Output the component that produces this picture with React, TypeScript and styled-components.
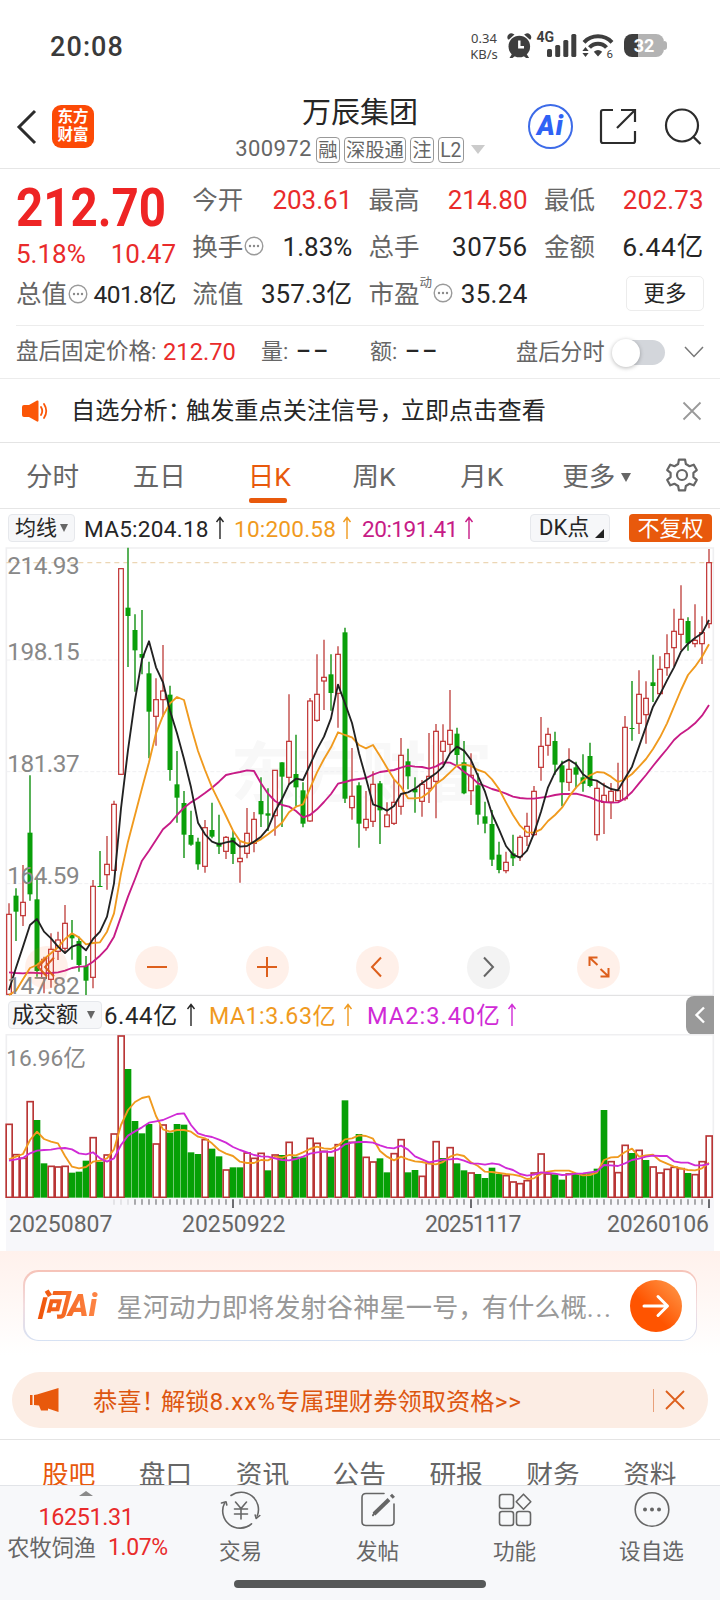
import React from 'react';
import styled, { createGlobalStyle } from 'styled-components';

const RED = '#e92b2b';
const DARK = '#262626';
const GRAY = '#666666';
const ORANGE = '#e8590c';
const AMBER = '#f09a1e';
const MAGENTA = '#c71b86';
const VIOLET = '#d02bd6';

const GlobalStyle = createGlobalStyle`
  * { box-sizing: border-box; }
  html, body { margin: 0; padding: 0; background: #fff; }
  body {
    width: 720px;
    font-family: Roboto, "Noto Sans CJK SC", sans-serif;
    color: ${DARK};
    line-height: 1;
  }
  svg { display: block; flex: none; }
`;

const Screen = styled.div`
  width: 720px;
  height: 1600px;
  overflow: hidden;
  background: #fff;
  display: flex;
  flex-direction: column;
`;

const Txt = styled.span<{ $s: number; $c?: string; $ls?: number; $ml?: number; $mt?: number; $w?: number; $b?: number }>`
  flex: none;
  white-space: nowrap;
  line-height: 1.3;
  font-size: ${p => p.$s}px;
  color: ${p => p.$c || DARK};
  letter-spacing: ${p => p.$ls || 0}px;
  margin-left: ${p => p.$ml || 0}px;
  margin-top: ${p => p.$mt || 0}px;
  font-weight: ${p => p.$b || 400};
  ${p => (p.$w ? `width: ${p.$w}px;` : '')}
`;
const Spaced = styled.span<{ $ls: number }>`
  letter-spacing: ${p => p.$ls}px;
`;

/* ---------- status bar ---------- */

const StatusBar = styled.div`
  height: 85px;
  padding: 6px 53px 0 50px;
  display: flex;
  align-items: center;
  flex: none;
`;
const StatusIcons = styled.div`
  margin-left: auto;
  display: flex;
  align-items: center;
`;
const NetSpeed = styled.div`
  font-family: "Noto Sans", sans-serif;
  font-size: 13px;
  line-height: 16px;
  color: #444;
  width: 36px;
  text-align: center;
`;
const Battery = styled.div`
  width: 40px;
  height: 23px;
  margin-left: 7px;
  border-radius: 8px;
  background: linear-gradient(90deg, #3e3e3e 0 14px, #b3b3b3 14px);
  color: #fff;
  font-size: 18px;
  font-weight: 700;
  line-height: 24px;
  text-align: center;
`;
const BatteryTip = styled.div`
  width: 3px;
  height: 9px;
  border-radius: 0 4px 4px 0;
  background: #b3b3b3;
`;

/* ---------- header ---------- */

const Header = styled.header`
  flex: none;
  height: 84px;
  border-bottom: 1px solid #e6e6e6;
  display: grid;
  grid-template-columns: 228px 264px 228px;
`;
const HeadLeft = styled.div`
  display: flex;
  align-items: center;
  padding-left: 16px;
`;
const Logo = styled.div`
  margin-left: 15px;
  width: 42px;
  height: 43px;
  border-radius: 9px;
  background: #fc4a06;
  color: #fff;
  font-size: 15.5px;
  font-weight: 700;
  line-height: 18px;
  text-align: center;
  padding-top: 3px;
`;
const HeadCenter = styled.div`
  display: flex;
  flex-direction: column;
  align-items: center;
  padding-top: 10px;
`;
const SubRow = styled.div`
  display: flex;
  align-items: center;
  height: 26px;
  margin-top: 4px;
`;
const Tag = styled.span<{ $w: number }>`
  width: ${p => p.$w}px;
  height: 26px;
  margin-left: 4px;
  border: 1px solid #999;
  border-radius: 4px;
  font-size: 19.3px;
  line-height: 25px;
  text-align: center;
  color: ${GRAY};
  white-space: nowrap;
`;
const HeadRight = styled.div`
  display: flex;
  align-items: center;
  padding-left: 36px;
`;
const AiBadge = styled.div`
  width: 45px;
  height: 45px;
  border: 2px solid #3d6be8;
  border-radius: 50%;
  color: #2f62f5;
  font-size: 27px;
  font-weight: 900;
  font-style: italic;
  line-height: 41px;
  text-align: center;
  letter-spacing: 1px;
`;

/* ---------- quote ---------- */

const Quote = styled.section`
  flex: none;
  height: 156px;
  padding: 8px 16px 0;
  display: grid;
  grid-template-columns: 160px 160px 159px 160px;
  column-gap: 16.3px;
`;
const QuoteCol = styled.div`
  display: flex;
  flex-direction: column;
`;
const Cell = styled.div<{ $h?: number }>`
  height: ${p => p.$h || 47}px;
  display: flex;
  align-items: center;
  justify-content: space-between;
`;
const CellLabel = styled.div`
  display: flex;
  align-items: center;
  font-size: 25.5px;
  color: ${GRAY};
  white-space: nowrap;
`;
const BigPrice = styled.div`
  height: 61px;
  font-size: 54px;
  font-weight: 700;
  line-height: 61px;
  color: #ee2424;
  white-space: nowrap;
  transform: scaleX(0.88);
  transform-origin: left center;
`;
const MoreButton = styled.div`
  margin: 5px 0 0 auto;
  width: 78px;
  height: 35px;
  border: 1px solid #ececec;
  border-radius: 5px;
  font-size: 21.5px;
  line-height: 34px;
  text-align: center;
`;
const Sup = styled.sup`
  font-size: 12.5px;
  align-self: flex-start;
  margin-top: -5px;
`;

const AfterHours = styled.section`
  flex: none;
  height: 54px;
  border-bottom: 1px solid #ececec;
  padding: 0 16px;
`;
const AfterRow = styled.div`
  height: 53px;
  border-top: 1px solid #ececec;
  display: flex;
  align-items: center;
`;
const Toggle = styled.div`
  width: 52px;
  height: 25px;
  margin-left: 8px;
  border-radius: 13px;
  background: #d3d6db;
`;
const Knob = styled.div`
  width: 28px;
  height: 28px;
  margin: -1px 0 0 -1px;
  border-radius: 50%;
  background: #fff;
  box-shadow: 0 1px 4px rgba(0, 0, 0, 0.28);
`;

const Notice = styled.section`
  flex: none;
  height: 64px;
  padding: 0 18px 0 21px;
  border-bottom: 1px solid #e4e4e4;
  display: flex;
  align-items: center;
`;

/* ---------- chart tabs ---------- */

const Tabs = styled.nav`
  flex: none;
  height: 66px;
  border-bottom: 1px solid #e6e6e6;
  padding: 3px 21px 0 26px;
  display: flex;
  align-items: center;
`;
const TabItem = styled.div<{ $w: number; $on?: boolean }>`
  width: ${p => p.$w}px;
  height: 56px;
  padding-top: 11px;
  display: flex;
  flex-direction: column;
  align-items: flex-start;
  font-size: 26.5px;
  line-height: 34px;
  color: ${p => (p.$on ? ORANGE : GRAY)};
`;
const Underline = styled.i`
  width: 38px;
  height: 5px;
  margin: 4px 0 0 1px;
  border-radius: 2px;
  background: ${ORANGE};
`;
const TabMore = styled.div`
  display: flex;
  align-items: center;
`;
const Caret = styled.i<{ $c?: string; $w?: number; $h?: number; $ml?: number }>`
  flex: none;
  border-left: ${p => (p.$w || 10) / 2}px solid transparent;
  border-right: ${p => (p.$w || 10) / 2}px solid transparent;
  border-top: ${p => p.$h || 8}px solid ${p => p.$c || GRAY};
  margin-left: ${p => p.$ml || 0}px;
`;

/* ---------- charts ---------- */

const Legend = styled.div<{ $h: number }>`
  flex: none;
  height: ${p => p.$h}px;
  padding-left: 8px;
  display: flex;
  align-items: center;
`;
const Picker = styled.div<{ $w: number; $ml?: number; $pl: number }>`
  width: ${p => p.$w}px;
  height: 28px;
  margin-left: ${p => p.$ml || 0}px;
  padding-left: ${p => p.$pl}px;
  border: 1px solid #e6e8ec;
  border-radius: 4px;
  background: #f6f7f9;
  display: flex;
  align-items: center;
  flex: none;
`;
const Adjust = styled.div`
  width: 83px;
  height: 28px;
  margin-left: 19px;
  border-radius: 4px;
  background: ${ORANGE};
  color: #fff;
  font-size: 22px;
  line-height: 30px;
  text-align: center;
`;
const Panel = styled.div<{ $h: number }>`
  position: relative;
  flex: none;
  height: ${p => p.$h}px;
`;
const ChartButtons = styled.div`
  position: absolute;
  left: 24.5px;
  top: 398.5px;
  display: flex;
  gap: 67.6px;
`;
const RoundButton = styled.div<{ $muted?: boolean }>`
  width: 43px;
  height: 43px;
  border-radius: 50%;
  background: ${p => (p.$muted ? '#f3f3f3' : 'rgba(255, 105, 40, 0.1)')};
  display: flex;
  align-items: center;
  justify-content: center;
`;
const PullTab = styled.div`
  margin: 0 6px 0 auto;
  width: 28px;
  height: 39px;
  border-radius: 8px 0 0 8px;
  background: #999;
  display: flex;
  align-items: center;
  justify-content: center;
`;
const Axis = styled.div`
  flex: none;
  height: 53px;
  margin: 0 6px;
  background: #f7f7fa;
`;
const AxisLabels = styled.div`
  display: flex;
  padding: 2px 0 0 3px;
`;

/* ---------- promos ---------- */

const AskArea = styled.section`
  flex: none;
  height: 121px;
  padding: 19px 23px 0;
  background: linear-gradient(#fff1ec, #fff 104px);
`;
const AskFrame = styled.div`
  height: 71px;
  padding: 1.5px;
  border-radius: 15px;
  background: linear-gradient(#f6c3b8, #f2dcdf 50%, #d6e1f3);
`;
const AskBox = styled.div`
  height: 68px;
  border-radius: 14px;
  background: #fff;
  padding: 0 14px 0 12px;
  display: flex;
  align-items: center;
`;
const AskLogo = styled.div`
  width: 66px;
  font-size: 31px;
  font-weight: 900;
  font-style: italic;
  line-height: 36px;
  letter-spacing: 0.4px;
  white-space: nowrap;
  color: transparent;
  background: linear-gradient(90deg, #ef5308, #ff8a4c);
  background-clip: text;
  -webkit-background-clip: text;
`;
const Go = styled.div`
  margin-left: auto;
  width: 52px;
  height: 52px;
  border-radius: 50%;
  background: linear-gradient(225deg, #ff9142 10%, #ff5400 60%);
  display: flex;
  align-items: center;
  justify-content: center;
`;
const Promo = styled.section`
  flex: none;
  height: 56px;
  margin: 0 12px 11px;
  padding: 0 23px 0 17px;
  border-radius: 28px;
  background: #fcede4;
  display: flex;
  align-items: center;
`;
const Separator = styled.i`
  width: 1px;
  height: 23px;
  margin: 0 11px 0 auto;
  background: #e8a07a;
`;

const InfoTabs = styled.nav`
  flex: none;
  height: 46px;
  border-top: 1px solid #e4e4e4;
  overflow: hidden;
  padding: 17px 0 0 42px;
  display: flex;
`;
const InfoTab = styled.div<{ $on?: boolean }>`
  width: 97px;
  font-size: 26.7px;
  line-height: 36px;
  color: ${p => (p.$on ? ORANGE : GRAY)};
`;

/* ---------- bottom bar ---------- */

const Bottom = styled.footer`
  flex: 1;
  border-top: 1px solid #e2e4e8;
  background: #f7f8fa;
  display: flex;
  flex-direction: column;
`;
const BottomRow = styled.div`
  height: 94px;
  display: flex;
`;
const Sector = styled.div`
  width: 172px;
  display: flex;
  flex-direction: column;
  align-items: center;
  padding-top: 5px;
`;
const SectorLine = styled.div<{ $mt?: number }>`
  display: flex;
  align-items: center;
  height: 30px;
  margin-top: ${p => p.$mt || 0}px;
`;
const Action = styled.div`
  width: 137px;
  padding-top: 5px;
  display: flex;
  flex-direction: column;
  align-items: center;
`;
const HomeBar = styled.div`
  width: 252px;
  height: 8px;
  margin-left: 234px;
  border-radius: 4px;
  background: #565858;
`;

/* ---------- chart data (drawing units are thirds of a pixel) ---------- */

const PITCH = 21;
const cx = (i: number) => 27 + i * PITCH;

// direction, high, low, body top, body bottom
const candles: string[] = `
r,1090,1363,1123,1363 g,1045,1203,1067,1115 r,975,1158,1087,1127 g,706,1082,878,1063 g,1012,1310,1078,1293
r,1250,1360,1258,1315 r,1180,1343,1228,1318 r,1175,1260,1200,1234 r,1095,1240,1150,1225 g,1140,1259,1184,1195
g,1190,1295,1203,1275 g,1248,1365,1277,1322 r,1020,1345,1039,1312 g,933,1041,1038,1041 r,888,1049,973,1004
r,782,992,793,991 r,86,703,86,703 g,23,381,203,228 g,223,455,270,331 g,210,403,342,353
g,365,655,400,515 r,415,617,479,529 r,315,530,453,479 g,437,722,464,690 g,633,848,733,773
g,753,954,789,884 g,812,917,885,914 g,893,989,905,973 r,840,998,863,979 g,788,895,870,890
g,824,942,908,920 r,888,957,892,934 g,873,972,893,942 r,903,1028,955,965 r,804,955,880,940
r,816,937,838,910 g,712,861,783,823 g,745,873,820,827 r,690,887,691,827 g,667,861,667,710
r,463,735,604,712 g,584,798,702,742 g,727,862,751,851 r,474,845,483,843 r,343,545,463,541
r,299,510,412,423 g,343,512,403,459 r,319,563,343,460 g,263,789,277,776 r,624,839,769,803
g,727,923,736,851 r,753,872,838,863 r,694,861,733,844 g,723,912,730,811 r,787,860,825,860
r,718,855,787,850 r,594,824,646,799 g,626,748,664,709 g,712,818,747,757 r,720,830,733,784
r,579,789,709,745 r,552,835,574,724 r,553,675,604,634 r,450,638,571,613 g,563,677,581,645
g,603,763,667,760 r,640,795,706,752 g,700,854,736,824 g,785,880,829,851 g,810,978,852,959
g,905,1000,944,990 r,935,1000,967,992 g,884,978,940,955 r,886,963,892,950 r,818,918,859,889
r,738,887,754,884 r,531,722,619,682 r,563,647,583,616 g,575,704,603,674 g,662,799,676,727
r,625,753,688,727 g,665,745,682,704 g,643,755,712,731 g,608,742,648,738 r,722,902,745,884
r,728,882,766,787 r,729,837,754,786 r,668,782,752,782 r,528,782,562,776 g,423,602,564,567
r,391,582,463,550 r,424,611,475,524 g,344,486,427,438 r,349,463,388,461 r,283,407,341,383
r,206,380,274,323 r,136,330,238,283 g,232,332,243,310 r,193,322,301,311 r,229,372,278,311
r,27,265,68,251`.trim().split(/\s+/);

const ma5 = [1350,1283,1220,1155,1137,1175,1195,1220,1239,1220,1213,1231,1197,1175,1130,1030,805,630,480,358,304,382,427,512,580,657,742,848,883,905,913,907,903,920,918,905,890,865,815,777,733,716,720,675,628,590,535,434,490,549,640,715,793,801,812,798,762,757,746,730,715,700,680,640,620,632,660,708,755,822,868,918,944,953,932,880,815,742,697,670,659,673,703,718,722,736,747,751,715,680,620,560,500,463,421,382,335,311,294,280,240];
const ma10 = [1365,1352,1318,1284,1275,1257,1240,1222,1197,1180,1192,1213,1209,1207,1175,1120,1000,905,825,745,667,580,527,490,471,480,560,633,690,742,785,828,872,903,910,908,898,883,866,848,817,800,793,745,697,657,622,577,585,592,615,625,615,648,683,718,740,775,775,772,757,732,717,697,677,673,678,690,697,718,747,787,825,857,877,878,868,843,825,803,770,743,722,706,696,698,710,726,718,702,680,657,627,592,550,500,450,405,380,350,313];
const ma20 = [1297,1299,1300,1298,1299,1300,1299,1297,1292,1284,1280,1279,1265,1247,1225,1190,1130,1070,1017,962,932,900,868,850,825,803,787,774,759,743,725,705,700,696,691,693,730,761,783,795,800,813,832,825,808,786,762,731,726,720,717,714,704,696,693,690,683,677,680,681,686,679,667,668,678,695,710,730,738,747,753,761,770,774,776,776,773,770,765,762,762,761,766,772,781,786,788,787,775,756,730,705,678,652,627,600,581,567,550,527,495];

const volumes: string[] = `
r401 r492 r503 r333 g390 g520 r527 r529 r527 g548 g545 g512 r441 g515 r493 r430 r136 g237 g393 g430
g402 r460 r403 g428 g402 g404 g487 g492 r447 g476 g499 r538 g532 g532 r487 r503 r488 g541 r493 g495
r455 g500 g502 r443 r458 r482 g500 r462 g331 r455 g432 r500 r514 g505 g547 r489 r447 g547 g540 r557
r518 r453 g504 r471 g520 g541 r547 g552 g564 g533 g552 r555 r574 r579 r570 r547 r490 r550 g553 g569
r550 g550 g550 g550 g536 g360 r513 r546 r464 g489 r479 g510 r529 r547 r536 r530 r534 g549 r552 r513 r436`
  .trim().split(/\s+/);
const vma5 = [508,500,492,450,425,447,455,460,498,530,535,531,515,512,505,478,405,360,336,324,319,378,418,425,420,420,425,440,445,460,480,491,498,515,519,519,510,511,500,503,495,496,487,477,470,475,477,467,448,445,436,438,446,483,500,511,500,508,514,516,521,523,516,500,493,498,517,528,545,546,549,552,554,558,567,565,551,545,542,542,542,550,556,555,548,510,502,501,486,476,500,496,494,512,521,530,535,540,541,535,518];
const vma10 = [512,508,504,490,482,480,479,475,474,478,490,493,487,505,515,505,465,437,424,412,398,394,390,381,372,370,405,430,437,441,449,458,471,480,487,495,499,500,505,510,511,507,500,491,487,485,486,479,463,458,456,456,458,466,473,475,467,479,499,508,517,513,509,508,506,512,520,521,524,520,523,534,540,552,557,554,547,549,551,555,554,551,550,547,544,525,526,528,520,510,506,500,497,498,498,514,518,518,526,526,522];

const Line = ({ data, color }: { data: number[]; color: string }) => (
  <polyline
    points={data.map((v, i) => `${cx(i)},${v}`).join(' ')}
    fill="none"
    stroke={color}
    strokeWidth={5.6}
    strokeLinejoin="round"
  />
);

const PriceChart = () => (
  <svg width="720" height="449" viewBox="0 21 2160 1347">
    <text x="692" y="768" fontSize="196" fontWeight="700" fill="#f8f8f8">东方财富</text>
    <path d="M19 1368V24H2140V1368" fill="none" stroke="#efeff1" strokeWidth="5" />
    <path d="M19 1366H2140" stroke="#dcdcde" strokeWidth="3" />
    <path d="M19 360H2140M19 695H2140M19 1031H2140" stroke="#f0f0f2" strokeWidth="3" strokeDasharray="12 6" />
    <path d="M19 68H2140" stroke="#ecd6b4" strokeWidth="4" strokeDasharray="15 12" />
    {candles.map((c, i) => {
      const [dir, h, l, t, b] = c.split(',');
      const up = dir === 'r';
      const top = +t;
      const size = Math.max(+b - top, 2);
      return (
        <g key={i}>
          <path d={`M${cx(i)} ${h}V${l}`} stroke={up ? '#d17775' : '#4cac4c'} strokeWidth="5.6" />
          {up ? (
            <rect x={cx(i) - 7} y={top} width="14" height={size} fill="#fff" stroke="#c03232" strokeWidth="3.6" />
          ) : (
            <rect x={cx(i) - 7.5} y={top} width="15" height={size} fill="#0a9f0a" />
          )}
        </g>
      );
    })}
    <Line data={ma20} color={MAGENTA} />
    <Line data={ma10} color={AMBER} />
    <Line data={ma5} color="#222" />
    <g fontSize="73" fill="#888" letterSpacing="-1.5">
      <text x="22" y="103">214.93</text>
      <text x="22" y="360">198.15</text>
      <text x="22" y="695">181.37</text>
      <text x="22" y="1031">164.59</text>
      <text x="22" y="1361">147.82</text>
    </g>
  </svg>
);

const VolumeChart = () => (
  <svg width="720" height="164" viewBox="0 132 2160 492">
    <path d="M19 624V134H2140V624" fill="none" stroke="#efeff1" strokeWidth="5" />
    {volumes.map((v, i) => {
      const top = +v.slice(1);
      return v[0] === 'r' ? (
        <rect key={i} x={cx(i) - 8.5} y={top + 2} width="18" height={620 - top} fill="#fff" stroke="#b93636" strokeWidth="5" />
      ) : (
        <rect key={i} x={cx(i) - 10} y={top} width="20" height={623 - top} fill="#06a006" />
      );
    })}
    <Line data={vma5} color={AMBER} />
    <Line data={vma10} color={VIOLET} />
    <text x="19" y="227" fontSize="68" fill="#888">16.96亿</text>
  </svg>
);

const Ticks = () => (
  <svg width="708" height="10" viewBox="18 623 2124 30">
    {Array.from({ length: 86 }, (_, k) => k + 15).map(i => {
      const major = i === 32 || i === 66 || i === 100;
      return (
        <path
          key={i}
          d={`M${cx(i)} 627V${major ? 654 : 643}`}
          stroke={i < 18 ? '#d4d4d8' : '#6c6c70'}
          strokeWidth={major ? 6 : 3.4}
        />
      );
    })}
  </svg>
);

/* ---------- icons ---------- */

const Arrow = styled.svg<{ $ml: number }>`
  margin-left: ${p => p.$ml}px;
`;
const Up = ({ color, ml }: { color: string; ml: number }) => (
  <Arrow $ml={ml} width="10" height="24" viewBox="0 0 10 24">
    <path d="M5 23V2M1.5 6L5 1.5L8.5 6" fill="none" stroke={color} strokeWidth="1.4" />
  </Arrow>
);

const DotsSvg = styled.svg`
  margin: -3px 0 0 1px;
`;
const Dots = () => (
  <DotsSvg width="20" height="20" viewBox="0 0 20 20">
    <circle cx="10" cy="10" r="8.8" fill="none" stroke="#9a9a9a" strokeWidth="1.400" />
    <g fill="#8a8a8a">
      <circle cx="6" cy="10" r="1.200" />
      <circle cx="10" cy="10" r="1.200" />
      <circle cx="14" cy="10" r="1.200" />
    </g>
  </DotsSvg>
);

const GlyphStrip = styled.svg`
  margin-top: -2px;
`;
const StatusGlyphs = () => (
  <GlyphStrip width="115" height="28" viewBox="-2 0 115 28">
    <g fill="#3e3e3e">
      <circle cx="15.3" cy="15.5" r="10.8" />
      <path d="M4 8.5A4 4 0 0 1 9.5 3L10.5 3.6L5 8.5ZM26.6 8.5A4 4 0 0 0 21.1 3L20.1 3.6L25.6 8.5Z" />
      <path d="M8 23L5.5 27H8.5L11 25ZM22.6 23L25.1 27H22.1L19.6 25Z" />
      <rect x="43" y="18" width="5" height="8" rx="1.5" />
      <rect x="51.2" y="14" width="5" height="12" rx="1.5" />
      <rect x="59.3" y="9" width="5" height="17" rx="1.5" />
      <rect x="67.3" y="3" width="5" height="23" rx="1.5" />
      <path d="M94 25.5L89.800 20.8A6.500 6.500 0 0 1 98.200 20.8ZM78.400 20L81.500 16L84.600 20ZM78.400 22L81.500 26L84.600 22Z" />
    </g>
    <path d="M15.300 9.500V16.300H20" fill="none" stroke="#fff" strokeWidth="2.400" />
    <path d="M80 11.300A19.500 19.500 0 0 1 108 11.300M85.500 16.500A11.500 11.500 0 0 1 102.500 16.500" fill="none" stroke="#3e3e3e" strokeWidth="4" />
    <text x="32.500" y="11" fontSize="14" fontWeight="700" fill="#3e3e3e">4G</text>
    <text x="102.500" y="26.500" fontSize="11.500" fill="#3e3e3e">6</text>
  </GlyphStrip>
);

const stroke = { fill: 'none', stroke: '#666', strokeWidth: 1.6, strokeLinecap: 'round' as const, strokeLinejoin: 'round' as const };

const TradeIcon = () => (
  <svg width="42" height="38" viewBox="0 0 42 38" {...stroke}>
    <path d="M11 4.5A17.3 17.3 0 0 1 37.2 25M31.5 32.8A17.3 17.3 0 0 1 4.6 12" />
    <path d="M1.5 12L6 10.8L6.8 14M39.8 24.5L36.2 27.5L35.2 24" />
    <path d="M15.5 11L21 17.5L26.5 11M21 17.5V28M14.5 18H27.5M14.5 23H27.5" />
  </svg>
);
const PostIcon = () => (
  <svg width="36" height="38" viewBox="0 0 36 38" {...stroke}>
    <path d="M24 2.5H6Q2 2.5 2 6.5V30.5Q2 34.5 6 34.5H30Q34 34.5 34 30.5V13" />
    <path d="M14 23L29 8.5" strokeWidth="4" strokeLinecap="butt" />
    <path d="M13 24.300L15.500 20.500" strokeWidth="2" />
    <path d="M31.300 6.300L33.500 4.200" strokeWidth="4.200" strokeLinecap="butt" />
  </svg>
);
const FunctionIcon = () => (
  <svg width="34" height="38" viewBox="0 0 34 38" {...stroke}>
    <rect x="1.5" y="3.5" width="14" height="14" rx="2.5" />
    <rect x="1.5" y="20.5" width="14" height="14" rx="2.5" />
    <rect x="18.5" y="20.5" width="14" height="14" rx="2.5" />
    <path d="M25.5 3.2L32.8 10.7L25.5 18.2L18.2 10.7Z" />
  </svg>
);
const MoreIcon = () => (
  <svg width="38" height="38" viewBox="0 0 38 38" {...stroke}>
    <circle cx="19" cy="18.5" r="16.8" />
    <g fill="#666" stroke="none">
      <circle cx="12" cy="18.5" r="2" />
      <circle cx="19" cy="18.5" r="2" />
      <circle cx="26" cy="18.5" r="2" />
    </g>
  </svg>
);

const Glyph = ({ d, color = '#dd5f1c', w = 2 }: { d: string; color?: string; w?: number }) => (
  <svg width="24" height="24" viewBox="0 0 24 24">
    <path d={d} fill="none" stroke={color} strokeWidth={w} />
  </svg>
);

const GearSvg = styled.svg`
  margin-top: -4px;
`;
const gearPath = (() => {
  const pts: string[] = [];
  for (let k = 0; k < 6; k++) {
    const base = (k * 60 - 90) * (Math.PI / 180);
    [[-0.34, 11.6], [-0.2, 15.6], [0.2, 15.6], [0.34, 11.6]].forEach(([a, r]) => {
      pts.push(`${(17 + r * Math.cos(base + a)).toFixed(2)} ${(17 + r * Math.sin(base + a)).toFixed(2)}`);
    });
  }
  return `M${pts.join('L')}Z`;
})();

const ShareSvg = styled.svg`
  margin-left: 26px;
`;
const SearchSvg = styled.svg`
  margin-left: 27px;
`;
const ChevronSvg = styled.svg`
  margin-left: 19px;
`;
const CloseSvg = styled.svg`
  margin-left: auto;
`;
const CornerSvg = styled.svg`
  margin: 11px 0 0 6px;
`;

export default function App() {
  return (
    <Screen>
      <GlobalStyle />
      <StatusBar>
        <Txt $s={27} $c="#3a3a3a" $ls={1.1} $b={500} $mt={5}>20:08</Txt>
        <StatusIcons>
          <NetSpeed>0.34<br />KB/s</NetSpeed>
          <StatusGlyphs />
          <Battery>32</Battery>
          <BatteryTip />
        </StatusIcons>
      </StatusBar>

      <Header>
        <HeadLeft>
          <svg width="21" height="36" viewBox="0 0 21 36">
            <path d="M19 2L3 18L19 34" fill="none" stroke="#2c2c2c" strokeWidth="3" />
          </svg>
          <Logo>东方<br />财富</Logo>
        </HeadLeft>
        <HeadCenter>
          <Txt $s={29}>万辰集团</Txt>
          <SubRow>
            <Txt $s={22} $c={GRAY} $ls={0.4}>300972</Txt>
            <Tag $w={24}>融</Tag>
            <Tag $w={62}>深股通</Tag>
            <Tag $w={24}>注</Tag>
            <Tag $w={26}>L2</Tag>
            <Caret $c="#cbcbcb" $w={14} $h={9} $ml={7} />
          </SubRow>
        </HeadCenter>
        <HeadRight>
          <AiBadge>Ai</AiBadge>
          <ShareSvg width="38" height="38" viewBox="0 0 38 38">
            <path d="M14 2H4Q2 2 2 4V33Q2 35 4 35H34Q36 35 36 33V23M22 2H36V14M36 2L18 20" fill="none" stroke="#2c2c2c" strokeWidth="2.2" />
          </ShareSvg>
          <SearchSvg width="38" height="38" viewBox="0 0 38 38">
            <circle cx="18" cy="17.5" r="16" fill="none" stroke="#2c2c2c" strokeWidth="2.2" />
            <path d="M29 28.5L36.5 36" stroke="#2c2c2c" strokeWidth="2.4" />
          </SearchSvg>
        </HeadRight>
      </Header>

      <Quote>
        <QuoteCol>
          <BigPrice>212.70</BigPrice>
          <Cell $h={34}>
            <Txt $s={26} $c={RED}>5.18%</Txt>
            <Txt $s={26} $c={RED}>10.47</Txt>
          </Cell>
          <Cell $h={46}>
            <CellLabel>总值<Dots /></CellLabel>
            <Txt $s={24.5} $ls={-0.6}>401.8亿</Txt>
          </Cell>
        </QuoteCol>
        <QuoteCol>
          <Cell><CellLabel>今开</CellLabel><Txt $s={26} $c={RED}>203.61</Txt></Cell>
          <Cell><CellLabel>换手<Dots /></CellLabel><Txt $s={26}>1.83%</Txt></Cell>
          <Cell><CellLabel>流值</CellLabel><Txt $s={26}>357.3亿</Txt></Cell>
        </QuoteCol>
        <QuoteCol>
          <Cell><CellLabel>最高</CellLabel><Txt $s={26} $c={RED}>214.80</Txt></Cell>
          <Cell><CellLabel>总手</CellLabel><Txt $s={26} $ls={0.5}>30756</Txt></Cell>
          <Cell><CellLabel>市盈<Sup>动</Sup><Dots /></CellLabel><Txt $s={26} $ls={0.3}>35.24</Txt></Cell>
        </QuoteCol>
        <QuoteCol>
          <Cell><CellLabel>最低</CellLabel><Txt $s={26} $c={RED} $ls={0.2}>202.73</Txt></Cell>
          <Cell><CellLabel>金额</CellLabel><Txt $s={26.5} $ls={0.7}>6.44亿</Txt></Cell>
          <MoreButton>更多</MoreButton>
        </QuoteCol>
      </Quote>

      <AfterHours>
        <AfterRow>
          <Txt $s={22.5} $c={GRAY} $w={147}>盘后固定价格:</Txt>
          <Txt $s={23.7} $c={RED} $w={98}>212.70</Txt>
          <Txt $s={22} $c={GRAY} $w={35}>量:</Txt>
          <Txt $s={23} $w={74} $b={500} $ls={2.5}>––</Txt>
          <Txt $s={22} $c={GRAY} $w={35}>额:</Txt>
          <Txt $s={23} $w={111} $b={500} $ls={2.5}>––</Txt>
          <Txt $s={22.2} $c={GRAY}>盘后分时</Txt>
          <Toggle><Knob /></Toggle>
          <ChevronSvg width="20" height="12" viewBox="0 0 20 12">
            <path d="M1 1L10 10.5L19 1" fill="none" stroke="#777" strokeWidth="1.5" />
          </ChevronSvg>
        </AfterRow>
      </AfterHours>

      <Notice>
        <svg width="28" height="24" viewBox="0 0 28 24">
          <path d="M3 6H8L16 1.500Q17.500 1 17.500 2.500V21.500Q17.500 23 16 22.500L8 18H3Q1 18 1 16V8Q1 6 3 6Z" fill="#fb5607" />
          <path d="M20 8Q22.500 12 20 16M23 5Q27.500 12 23 19" fill="none" stroke="#fb5607" strokeWidth="1.800" strokeLinecap="round" />
        </svg>
        <Txt $s={24.2} $ml={22} $mt={3}>
          自选分析<Spaced $ls={-6}>：</Spaced>触发重点关注信号<Spaced $ls={-3}>，</Spaced>立即点击查看
        </Txt>
        <CloseSvg width="20" height="20" viewBox="0 0 20 20">
          <path d="M1.5 1.5L18.5 18.5M18.5 1.5L1.5 18.5" stroke="#999" strokeWidth="1.8" />
        </CloseSvg>
      </Notice>

      <Tabs>
        <TabItem $w={107}>分时</TabItem>
        <TabItem $w={115}>五日</TabItem>
        <TabItem $w={105} $on>日K<Underline /></TabItem>
        <TabItem $w={108}>周K</TabItem>
        <TabItem $w={102}>月K</TabItem>
        <TabItem $w={103}><TabMore>更多<Caret $ml={6} $h={9} /></TabMore></TabItem>
        <GearSvg width="34" height="34" viewBox="0 0 34 34">
          <path d={gearPath} fill="none" stroke="#666" strokeWidth="2.2" strokeLinejoin="round" />
          <circle cx="17" cy="17" r="5" fill="none" stroke="#666" strokeWidth="2.2" />
        </GearSvg>
      </Tabs>

      <Legend $h={38}>
        <Picker $w={67} $pl={6}><Txt $s={21} $mt={1}>均线</Txt><Caret $ml={3} $w={9} /></Picker>
        <Txt $s={22.6} $ml={9} $w={129} $ls={0.25} $mt={3}>MA5:204.18</Txt>
        <Up color={DARK} ml={2} />
        <Txt $s={22.6} $c={AMBER} $ml={9} $w={108} $ls={0.2} $mt={3}>10:200.58</Txt>
        <Up color={AMBER} ml={0} />
        <Txt $s={22.6} $c={MAGENTA} $ml={10} $w={100} $ls={-0.5} $mt={3}>20:191.41</Txt>
        <Up color={MAGENTA} ml={2} />
        <Picker $w={80} $ml={56} $pl={8}>
          <Txt $s={22} $mt={1}>DK点</Txt>
          <CornerSvg width="9" height="9" viewBox="0 0 9 9">
            <path d="M9 0V9H0Z" fill="#222" />
          </CornerSvg>
        </Picker>
        <Adjust>不复权</Adjust>
      </Legend>

      <Panel $h={449}>
        <PriceChart />
        <ChartButtons>
          <RoundButton><Glyph d="M13 2.5L4 12L13 21.5M20 2.5L11 12L20 21.5" /></RoundButton>
          <RoundButton><Glyph d="M2 12H22" /></RoundButton>
          <RoundButton><Glyph d="M2 12H22M12 2V22" /></RoundButton>
          <RoundButton><Glyph d="M15 2.5L6 12L15 21.5" /></RoundButton>
          <RoundButton $muted><Glyph d="M8 2.5L17 12L8 21.5" color="#666" /></RoundButton>
          <RoundButton><Glyph d="M10.500 2.500H2.500V11M2.500 2.500L10.500 10M13.500 21.500H21.500V13M21.500 21.500L13.500 14" /></RoundButton>
        </ChartButtons>
      </Panel>

      <Legend $h={38}>
        <Picker $w={94} $pl={3}><Txt $s={22} $mt={1}>成交额</Txt><Caret $ml={9} $w={9} /></Picker>
        <Txt $s={24} $ml={2} $w={80} $ls={0.6} $mt={3}>6.44亿</Txt>
        <Up color={DARK} ml={2} />
        <Txt $s={23.2} $c={AMBER} $ml={13} $w={129} $ls={0.5} $mt={3}>MA1:3.63亿</Txt>
        <Up color={AMBER} ml={5} />
        <Txt $s={23.6} $c={VIOLET} $ml={14} $w={138} $ls={1} $mt={3}>MA2:3.40亿</Txt>
        <Up color={VIOLET} ml={2} />
        <PullTab>
          <svg width="12" height="18" viewBox="0 0 12 18">
            <path d="M10 1.5L2.5 9L10 16.5" fill="none" stroke="#fff" strokeWidth="2.4" />
          </svg>
        </PullTab>
      </Legend>

      <Panel $h={164}><VolumeChart /></Panel>
      <Axis>
        <Ticks />
        <AxisLabels>
          <Txt $s={23} $c={GRAY} $w={173}>20250807</Txt>
          <Txt $s={23} $c={GRAY} $w={243}>20250922</Txt>
          <Txt $s={23} $c={GRAY} $w={182} $ls={-1}>20251117</Txt>
          <Txt $s={23} $c={GRAY} $ls={-0.2}>20260106</Txt>
        </AxisLabels>
      </Axis>

      <AskArea>
        <AskFrame>
          <AskBox>
            <AskLogo>问Ai</AskLogo>
            <Txt $s={26.3} $c="#999" $ml={14} $mt={5}>
              星河动力即将发射谷神星一号<Spaced $ls={-3}>，</Spaced>有什么概<Spaced $ls={1.6}>...</Spaced>
            </Txt>
            <Go>
              <svg width="28" height="24" viewBox="0 0 28 24">
                <path d="M2 12H25M16 2.5L25.5 12L16 21.5" fill="none" stroke="#fff" strokeWidth="3" strokeLinecap="round" strokeLinejoin="round" />
              </svg>
            </Go>
          </AskBox>
        </AskFrame>
      </AskArea>

      <Promo>
        <svg width="30" height="26" viewBox="0 0 30 26">
          <path d="M1 8H3.5V18H1ZM5 8L8 7.5L29.5 1V25L19 21.5V23.5H12L10 18.5L5 18Z" fill={ORANGE} />
        </svg>
        <Txt $s={24.3} $c="#dd5610" $ml={34} $mt={3}>
          恭喜<Spaced $ls={-5}>！</Spaced>解锁<Spaced $ls={0.9}>8.xx%</Spaced>专属理财券领取资格<Spaced $ls={1}>&gt;&gt;</Spaced>
        </Txt>
        <Separator />
        <svg width="20" height="20" viewBox="0 0 20 20">
          <path d="M1 1L19 19M19 1L1 19" stroke="#dd5f1c" strokeWidth="1.8" />
        </svg>
      </Promo>

      <InfoTabs>
        {['股吧', '盘口', '资讯', '公告', '研报', '财务', '资料'].map((t, i) => (
          <InfoTab key={t} $on={i === 0}>{t}</InfoTab>
        ))}
      </InfoTabs>

      <Bottom>
        <BottomRow>
          <Sector>
            <svg width="14" height="5" viewBox="0 0 14 5"><path d="M7 0L14 5H0Z" fill="#8a8a8a" /></svg>
            <SectorLine $mt={6}><Txt $s={23.4} $c={RED} $ls={-0.4}>16251.31</Txt></SectorLine>
            <SectorLine $mt={1}>
              <Txt $s={22.2} $c={GRAY} $ml={3}>农牧饲渔</Txt>
              <Txt $s={23} $c={RED} $ml={12} $ls={-0.4}>1.07%</Txt>
            </SectorLine>
          </Sector>
          <Action><TradeIcon /><Txt $s={21.6} $c={GRAY} $mt={9}>交易</Txt></Action>
          <Action><PostIcon /><Txt $s={21.6} $c={GRAY} $mt={9}>发帖</Txt></Action>
          <Action><FunctionIcon /><Txt $s={21.6} $c={GRAY} $mt={9}>功能</Txt></Action>
          <Action><MoreIcon /><Txt $s={21.6} $c={GRAY} $mt={9}>设自选</Txt></Action>
        </BottomRow>
        <HomeBar />
      </Bottom>
    </Screen>
  );
}
